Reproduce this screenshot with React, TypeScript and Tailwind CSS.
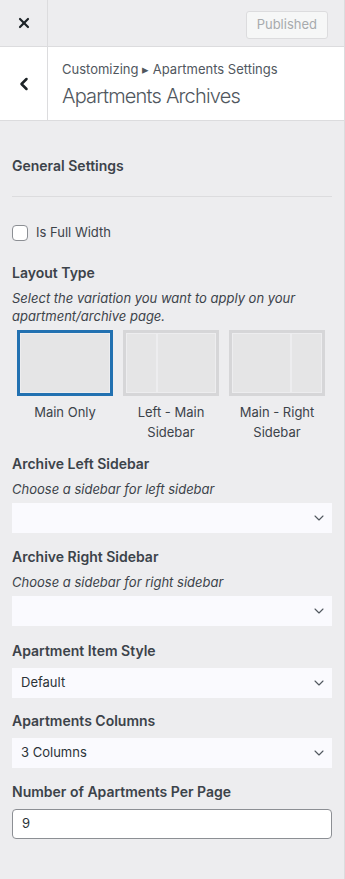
import { ChevronDown, ChevronLeft, X } from 'lucide-react'

const font = 'font-["Inter","Liberation_Sans",sans-serif]'

function Select({ value, gap }: { value?: string; gap: string }) {
  return (
    <div className={`${gap} flex h-[30px] items-center justify-between bg-[#fafafe] pl-[9px] pr-[5px] text-[13px] text-[#2c3338]`}>
      <span>{value ?? ''}</span>
      <ChevronDown className="h-[16px] w-[16px] text-[#50575e]" strokeWidth={1.6} />
    </div>
  )
}

function LayoutThumb({ label, selected, split }: { label: string; selected?: boolean; split?: 'left' | 'right' }) {
  return (
    <div className="flex w-[96px] flex-col items-center">
      <div className={`flex h-[66px] w-[96px] border-[3px] ${selected ? 'border-[#2271b1]' : 'border-[#d6d6d8]'} bg-[#ededef] p-[1px]`}>
        {split === 'left' && (
          <>
            <div className="w-[29px] bg-[#e5e5e6]" />
            <div className="w-[2px]" />
            <div className="flex-1 bg-[#e5e5e6]" />
          </>
        )}
        {split === 'right' && (
          <>
            <div className="flex-1 bg-[#e5e5e6]" />
            <div className="w-[2px]" />
            <div className="w-[29px] bg-[#e5e5e6]" />
          </>
        )}
        {!split && <div className="flex-1 bg-[#e5e5e6]" />}
      </div>
      <div className="mt-[6px] text-center text-[13px] leading-[20px] text-[#3c434a]">{label}</div>
    </div>
  )
}

function Heading({ children, gap }: { children: React.ReactNode; gap: string }) {
  return <div className={`${gap} text-[14px] font-semibold leading-[20px] text-[#3c434a]`}>{children}</div>
}

function Hint({ children }: { children: React.ReactNode }) {
  return <div className="mt-[6px] text-[13px] italic leading-[18px] text-[#3c434a]">{children}</div>
}

export default function App() {
  return (
    <div className={`${font} flex min-h-[879px] w-[345px] flex-col border-r border-[#dcdcde] bg-[#ededef]`}>
      {/* top bar */}
      <div className="flex h-[47px] border-b border-[#dcdcde]">
        <div className="flex w-[48px] items-center justify-center border-r border-[#dcdcde]">
          <X className="h-[16px] w-[16px] text-[#1d2327]" strokeWidth={3.2} />
        </div>
        <div className="flex flex-1 items-start justify-end pr-[16px] pt-[11px]">
          <div className="flex h-[28px] items-center rounded-[3px] border border-[#dcdcde] bg-[#f6f7f7] px-[10px] text-[13px] text-[#a7aaad]">
            Published
          </div>
        </div>
      </div>

      {/* section header */}
      <div className="flex h-[74px] border-b border-[#dcdcde] bg-white">
        <div className="flex w-[48px] items-center justify-center border-r border-[#dcdcde]">
          <ChevronLeft className="h-[20px] w-[20px] text-[#1d2327]" strokeWidth={3} />
        </div>
        <div className="flex flex-col justify-center pl-[14px] pt-[1px]">
          <div className="text-[13px] leading-[16px] text-[#50575e]">Customizing ▸ Apartments Settings</div>
          <div className="mt-[7px] text-[20px] font-light leading-[24px] tracking-[-0.8px] text-[#50575e]">Apartments Archives</div>
        </div>
      </div>

      {/* controls */}
      <div className="flex flex-col px-[12px] pt-[35px]">
        <Heading gap="">General Settings</Heading>
        <div className="mt-[20px] border-t border-[#dcdcde]" />

        <label className="mt-[26px] flex h-[20px] items-center gap-[8px] text-[13px] text-[#3c434a]">
          <span className="h-[16px] w-[16px] rounded-[4px] border border-[#8c8f94] bg-white" />
          Is Full Width
        </label>

        <Heading gap="mt-[20px]">Layout Type</Heading>
        <Hint>Select the variation you want to apply on your apartment/archive page.</Hint>
        <div className="mt-[5px] flex gap-[10px] px-[5px]">
          <LayoutThumb label="Main Only" selected />
          <LayoutThumb label="Left - Main Sidebar" split="left" />
          <LayoutThumb label="Main - Right Sidebar" split="right" />
        </div>

        <Heading gap="mt-[12px]">Archive Left Sidebar</Heading>
        <Hint>Choose a sidebar for left sidebar</Hint>
        <Select gap="mt-[5px]" />

        <Heading gap="mt-[14px]">Archive Right Sidebar</Heading>
        <Hint>Choose a sidebar for right sidebar</Hint>
        <Select gap="mt-[5px]" />

        <Heading gap="mt-[15px]">Apartment Item Style</Heading>
        <Select value="Default" gap="mt-[7px]" />

        <Heading gap="mt-[13px]">Apartments Columns</Heading>
        <Select value="3 Columns" gap="mt-[7px]" />

        <Heading gap="mt-[14px]">Number of Apartments Per Page</Heading>
        <div className="mt-[7px] flex h-[30px] items-center rounded-[4px] border border-[#8c8f94] bg-white px-[9px] text-[13px] text-[#2c3338]">
          9
        </div>
      </div>
    </div>
  )
}
